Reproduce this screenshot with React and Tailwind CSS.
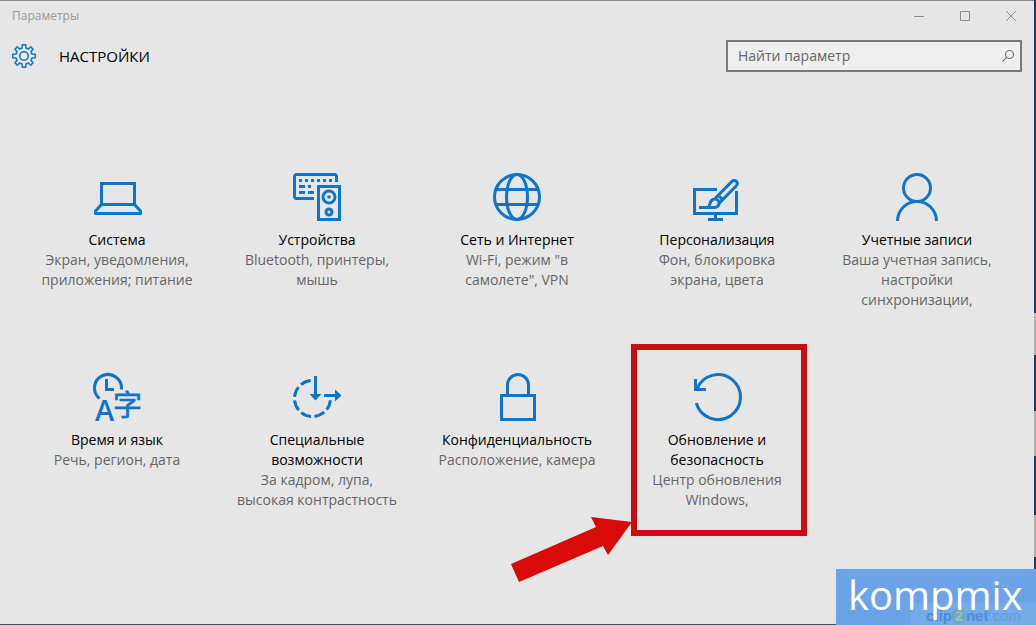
import React, { useState } from 'react';

const SystemIcon = () => (
  <svg width="48" height="48" viewBox="0 0 48 48" fill="none" stroke="currentColor" strokeWidth="3" className="overflow-visible">
    <path d="M8.5 31.5v-21h33v21z" />
    <path d="M8.5 31.500 2.500 38v2.500h45V38l-6-6.500" strokeLinejoin="round" />
  </svg>
);

const DevicesIcon = () => (
  <svg width="48" height="48" viewBox="0 0 48 48" fill="none" stroke="currentColor" strokeWidth="3">
    <path d="M43.5 9V3.500a2 2 0 0 0-2-2h-38a2 2 0 0 0-2 2v20a2 2 0 0 0 2 2H21" />
    <path d="M6 7.500h33" strokeDasharray="3 3" />
    <path d="M6 13.500h6M15 13.500h3M6 19.500h6M15 19.500h6" />
    <path d="M25.500 13.500h21v33h-21z" />
    <circle cx="36" cy="24" r="6" />
    <circle cx="36" cy="24" r="1.800" fill="currentColor" stroke="none" />
    <circle cx="36" cy="39" r="3" />
  </svg>
);

const NetworkIcon = () => (
  <svg width="48" height="48" viewBox="0 0 48 48" fill="none" stroke="currentColor" strokeWidth="3">
    <circle cx="24" cy="24" r="22.500" />
    <ellipse cx="24" cy="24" rx="10.500" ry="22.500" />
    <path d="M3 16.500h42M3 31.500h42" />
  </svg>
);

const PersonalizationIcon = () => (
  <svg width="48" height="48" viewBox="0 0 48 48" fill="none" stroke="currentColor" strokeWidth="3">
    <path d="M24 16.500H1.500v24h42V18" />
    <path d="M22.500 42v4M15 46.500h15" />
    <path d="M39 8.400a3.100 3.100 0 0 1 4.400 4.400L29.600 26.600l-4.400-4.400z" strokeLinejoin="round" />
    <path d="M25.200 22.200l-3.200 3.600M29.600 26.600l-3.200 3.600" />
    <path d="M6 34.500h14c4 0 6-2 6-4.600a4 4 0 0 0-4.200-4c-4.600 0-4.300 4.500-6.300 8.600" />
  </svg>
);

const AccountsIcon = () => (
  <svg width="48" height="48" viewBox="0 0 48 48" fill="none" stroke="currentColor" strokeWidth="3">
    <circle cx="24" cy="15" r="13.500" />
    <path d="M4.500 48a19.500 19.500 0 0 1 39 0" />
  </svg>
);

const TimeIcon = () => (
  <svg width="48" height="48" viewBox="0 0 48 48" fill="none" stroke="currentColor" strokeWidth="3" className="overflow-visible">
    <path d="M6.500 25.500A13.500 13.500 0 1 1 28.400 16.500" />
    <path d="M13.500 6v10.500H21" />
    <text x="2" y="48" fontSize="29" fill="currentColor" stroke="none" className="font-['Open_Sans',sans-serif] font-semibold">A</text>
    <text x="20" y="43" fontSize="29" fill="currentColor" strokeWidth="0.6" className="font-['Noto_Sans_CJK_SC',sans-serif] font-normal">字</text>
  </svg>
);

const AccessIcon = () => (
  <svg width="48" height="48" viewBox="0 0 48 48" fill="none" stroke="currentColor" strokeWidth="3">
    <path d="M17.750 7.600A18 18 0 1 0 37.400 27.250" strokeDasharray="10.600 3.530" />
    <path d="M22.500 3v20M31 22.500h12" />
    <path d="M16.500 21h12l-6 6.500zM42 16.500v12l6.500-6z" fill="currentColor" stroke="none" />
  </svg>
);

const PrivacyIcon = () => (
  <svg width="48" height="48" viewBox="0 0 48 48" fill="none" stroke="currentColor" strokeWidth="3">
    <path d="M8.500 22.500h33v24h-33z" />
    <path d="M14.500 22V12a10.500 10.500 0 0 1 21 0v10" />
  </svg>
);

const UpdateIcon = () => (
  <svg width="48" height="48" viewBox="0 0 48 48" fill="none" stroke="currentColor" strokeWidth="3" className="overflow-visible">
    <path d="M3.300 30A22.500 22.500 0 1 0 4 16" />
    <path d="M2.500 6v10.500H13" />
  </svg>
);

const GearIcon = () => (
  <svg width="24" height="24" viewBox="0 0 24 24" fill="none" stroke="currentColor" strokeWidth="1.500" strokeLinejoin="round">
    <path d="M10 4.100 10.300.8h3.400l.3 3.300 2.200.9 2.500-2.100 2.400 2.400L19 7.800l.9 2.200 3.300.3v3.400l-3.300.3-.9 2.200 2.100 2.500-2.400 2.400-2.500-2.100-2.200.9-.3 3.300h-3.400l-.3-3.300-2.200-.9-2.500 2.100-2.400-2.400L5 16.200 4.100 14l-3.300-.3v-3.400l3.300-.3L5 7.800 2.900 5.300l2.400-2.400L7.800 5z" />
    <circle cx="12" cy="12" r="4.200" />
  </svg>
);

const categories = [
  { title: 'Система', text: 'Экран, уведомления,\nприложения; питание', icon: SystemIcon },
  { title: 'Устройства', text: 'Bluetooth, принтеры,\nмышь', icon: DevicesIcon },
  { title: 'Сеть и Интернет', text: 'Wi-Fi, режим "в\nсамолете", VPN', icon: NetworkIcon },
  { title: 'Персонализация', text: 'Фон, блокировка\nэкрана, цвета', icon: PersonalizationIcon },
  { title: 'Учетные записи', text: 'Ваша учетная запись,\nнастройки\nсинхронизации,', icon: AccountsIcon },
  { title: 'Время и язык', text: 'Речь, регион, дата', icon: TimeIcon },
  { title: 'Специальные\nвозможности', text: 'За кадром, лупа,\nвысокая контрастность', icon: AccessIcon },
  { title: 'Конфиденциальность', text: 'Расположение, камера', icon: PrivacyIcon },
  { title: 'Обновление и\nбезопасность', text: 'Центр обновления\nWindows,', icon: UpdateIcon, marked: true },
];

function Highlight() {
  return (
    <>
      <span className="absolute left-3.5 right-2.5 top-0 bottom-2 border-6 border-[#cd0c10] pointer-events-none" />
      <svg className="absolute right-[184px] top-[172px] pointer-events-none" width="124" height="68" viewBox="0 0 124 68">
        <path d="M2 48 87 11 82 1 123 6 99 39 94 30 10 66z" fill="#d90a0a" />
      </svg>
    </>
  );
}

function Category({ title, text, icon: Icon, marked }) {
  return (
    <a href="#" className="relative h-[200px] pt-[29px] flex flex-col items-center text-center text-sm leading-5 whitespace-pre-line">
      <span className="text-[#0f75c8]"><Icon /></span>
      <span className="mt-[9px] text-black">{title}</span>
      <span className="text-[#666666]">{text}</span>
      {marked && <Highlight />}
    </a>
  );
}

function TitleBar() {
  return (
    <div className="flex items-start justify-between h-8 pl-3 border-t border-[#8d8b8c]">
      <span className="text-xs leading-[30px] text-[#9a9a9a]">Параметры</span>
      <div className="flex text-[#8c8c8c]">
        <button aria-label="Свернуть" className="w-[46px] h-[30px] flex items-center justify-center">
          <svg width="10" height="10" viewBox="0 0 10 10" stroke="currentColor"><path d="M0 5.500h10" /></svg>
        </button>
        <button aria-label="Развернуть" className="w-[46px] h-[30px] flex items-center justify-center">
          <svg width="10" height="10" viewBox="0 0 10 10" fill="none" stroke="currentColor"><path d="M.5.5h9v9h-9z" /></svg>
        </button>
        <button aria-label="Закрыть" className="w-[46px] h-[30px] flex items-center justify-center">
          <svg width="10" height="10" viewBox="0 0 10 10" stroke="currentColor"><path d="M0 0l10 10M10 0 0 10" /></svg>
        </button>
      </div>
    </div>
  );
}

function Header() {
  const [query, setQuery] = useState('');

  return (
    <header className="flex items-center justify-between h-12 px-3">
      <div className="flex items-center gap-[23px]">
        <span className="text-[#0f75c8]"><GearIcon /></span>
        <h1 className="text-[15px] font-medium text-black">НАСТРОЙКИ</h1>
      </div>
      <label className="flex items-center w-[296px] h-8 border-2 border-[#7a7a7a] bg-[#efefef] pl-2.5 pr-1.5">
        <input
          type="text"
          aria-label="Найти параметр"
          placeholder="Найти параметр"
          value={query}
          onChange={(e) => setQuery(e.target.value)}
          className="flex-1 min-w-0 bg-transparent outline-none text-sm text-[#666666] placeholder:text-[#666666]"
        />
        <svg width="12" height="12" viewBox="0 0 12 12" fill="none" stroke="#6e6e6e" strokeWidth="1.100">
          <circle cx="7.500" cy="4.500" r="4" />
          <path d="M4.600 7.400.3 11.700" />
        </svg>
      </label>
    </header>
  );
}

// Sliver of the desktop that shows next to the window
function DesktopEdge() {
  return (
    <div className="w-0.5 flex flex-col bg-[#17375c]">
      <span className="grow-[313]" />
      <span className="grow-[42] bg-[#b4b4b4]" />
      <span className="grow-[56]" />
      <span className="grow-[45] bg-[#b4b4b4]" />
      <span className="grow-[59]" />
      <span className="grow-[42] bg-[#b4b4b4]" />
      <span className="grow-[68]" />
    </div>
  );
}

function Watermark() {
  return (
    <div className="absolute right-0 bottom-0 w-[200px] h-14 bg-[#6ba3e6]">
      <div className="absolute right-0 bottom-0 w-[125px] h-[22px] pt-1 bg-[#74a9ea] flex items-center justify-center font-['Liberation_Sans',sans-serif] text-[15px] leading-4 font-bold">
        <span className="text-[#4b8cdb]">clip</span>
        <span className="w-3.5 h-4 rounded-full bg-[#6fa9b4] text-[#8fc0d8] text-center">2</span>
        <span className="text-[#4f8fdc]">net</span>
        <span className="font-normal text-[#659cdc]">.com</span>
      </div>
      <span className="absolute left-3 top-0 text-[40px] leading-[52px] text-white">kompmix</span>
    </div>
  );
}

function App() {
  return (
    <div className="relative flex min-h-screen bg-[#e6e6e6] font-['Open_Sans','Noto_Sans',sans-serif]">
      <div className="flex-1 min-w-0 border-b border-[#35516f]">
        <TitleBar />
        <Header />
        <main className="grid grid-cols-5 px-[17px] pt-16">
          {categories.map((item) => (
            <Category key={item.title} {...item} />
          ))}
        </main>
      </div>
      <DesktopEdge />
      <Watermark />
    </div>
  );
}

export default App;
